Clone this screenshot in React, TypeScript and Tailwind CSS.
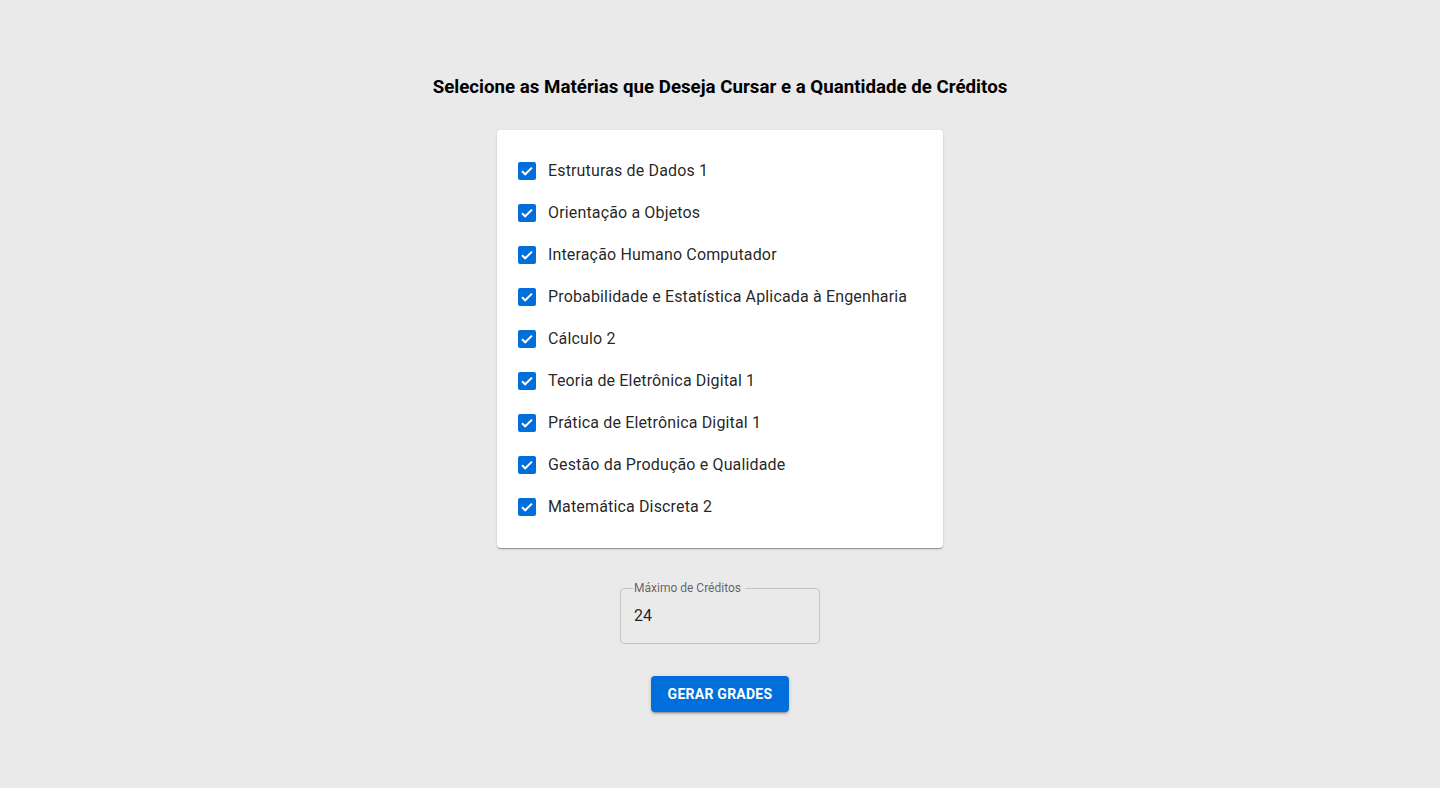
import { useState } from "react";

const materias = [
  "Estruturas de Dados 1",
  "Orientação a Objetos",
  "Interação Humano Computador",
  "Probabilidade e Estatística Aplicada à Engenharia",
  "Cálculo 2",
  "Teoria de Eletrônica Digital 1",
  "Prática de Eletrônica Digital 1",
  "Gestão da Produção e Qualidade",
  "Matemática Discreta 2",
];

export default function App() {
  const [checked, setChecked] = useState<boolean[]>(materias.map(() => true));
  const [creditos, setCreditos] = useState("24");

  const toggle = (i: number) =>
    setChecked((prev) => prev.map((c, idx) => (idx === i ? !c : c)));

  return (
    <div className="min-h-[788px] bg-[#eaeaea] font-['Roboto',sans-serif] text-[rgba(0,0,0,0.87)]">
      <div className="flex flex-col items-center pt-[75px]">
        {/* TITULO */}
        <h1 className="text-[18.72px] font-bold leading-[24px] text-black">
          Selecione as Matérias que Deseja Cursar e a Quantidade de Créditos
        </h1>

        {/* LISTA */}
        <div className="mt-[31px] w-[446px] rounded-[4px] bg-white px-[21px] py-[20px] shadow-[0_2px_1px_-1px_rgba(0,0,0,0.2),0_1px_1px_0_rgba(0,0,0,0.14),0_1px_3px_0_rgba(0,0,0,0.12)]">
          {materias.map((m, i) => (
            <label
              key={m}
              className="flex h-[42px] cursor-pointer items-center gap-[12px]"
              onClick={() => toggle(i)}
            >
              <Checkbox checked={checked[i]} />
              <span className="text-[16px] leading-[24px] tracking-[0.15px]">{m}</span>
            </label>
          ))}
        </div>

        {/* CREDITOS */}
        <fieldset className="mt-[34px] h-[62px] w-[200px] rounded-[4px] border border-[#c4c4c4] px-[12px]">
          <legend className="px-[1px] text-[12px] leading-[12px] text-[rgba(0,0,0,0.6)]">
            Máximo de Créditos&nbsp;
          </legend>
          <input
            value={creditos}
            onChange={(e) => setCreditos(e.target.value)}
            className="ml-[1px] mt-[12px] w-full bg-transparent text-[16px] leading-[19px] text-[rgba(0,0,0,0.87)] outline-none"
          />
        </fieldset>

        {/* BOTAO */}
        <button className="mt-[32px] h-[36px] w-[138px] rounded-[4px] bg-[#006fdc] text-[14px] font-bold uppercase tracking-[0.25px] text-white shadow-[0_3px_1px_-2px_rgba(0,0,0,0.2),0_2px_2px_0_rgba(0,0,0,0.14),0_1px_5px_0_rgba(0,0,0,0.12)]">
          Gerar Grades
        </button>
      </div>
    </div>
  );
}

function Checkbox({ checked }: { checked: boolean }) {
  if (!checked) {
    return <span className="h-[18px] w-[18px] rounded-[2px] border-2 border-[rgba(0,0,0,0.54)]" />;
  }
  return (
    <span className="flex h-[18px] w-[18px] items-center justify-center rounded-[2px] bg-[#006fdc]">
      <svg width="14" height="14" viewBox="0 0 14 14" fill="none">
        <path d="M2 7.2l3.2 3.1L12 3.6" stroke="white" strokeWidth="2" />
      </svg>
    </span>
  );
}
